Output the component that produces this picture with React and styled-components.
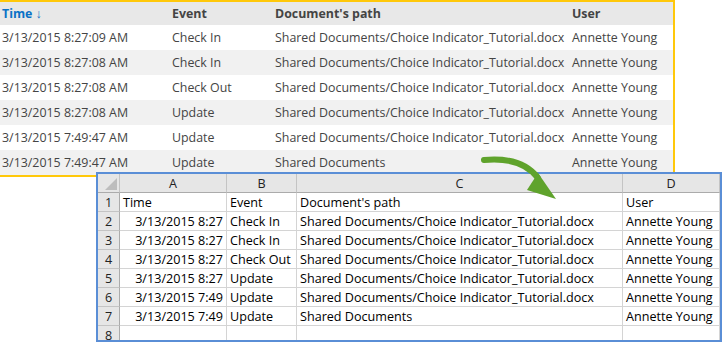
import React from "react";
import styled, { createGlobalStyle } from "styled-components";

const GlobalStyle = createGlobalStyle`
  html, body { margin: 0; padding: 0; background: #ffffff; }
  body { width: 722px; height: 342px; overflow: hidden; }
`;

const Page = styled.div`
  position: relative;
  width: 722px;
  height: 342px;
  overflow: hidden;
`;

/* ---------- SharePoint-like list ---------- */
const ListPanel = styled.div`
  width: 673px;
  border-top: 2px solid #ffc80a;
  border-right: 2px solid #ffc80a;
  border-bottom: 2px solid #ffc80a;
  background: #ffffff;
  font-family: "Open Sans", "Noto Sans", sans-serif;
  font-size: 12.4px;
  color: #444444;
`;

const ListRow = styled.div`
  display: grid;
  grid-template-columns: 170px 103px 297px 1fr;
  height: ${(p) => (p.$header ? 23 : 25)}px;
  align-items: center;
  background: ${(p) => (p.$header ? "#e8e8e8" : p.$alt ? "#f1f1f1" : "#ffffff")};
  font-weight: ${(p) => (p.$header ? 700 : 400)};
  color: ${(p) => (p.$header ? "#444444" : "#444444")};
`;

const ListCell = styled.div`
  padding-left: 2px;
  white-space: nowrap;
  overflow: hidden;
  color: ${(p) => (p.$sorted ? "#0a72c6" : "inherit")};
`;

const SortArrow = styled.span`
  font-weight: 400;
  margin-left: 3px;
`;

/* ---------- Excel-like sheet ---------- */
const Sheet = styled.div`
  position: relative;
  margin-left: 96px;
  margin-top: -5px;
  width: 622px;
  height: 166px;
  border: 2px solid #5a8ed6;
  background: #ffffff;
  overflow: hidden;
  font-family: "Open Sans", "Noto Sans", sans-serif;
  font-size: 12.6px;
  color: #000000;
`;

const SheetGrid = styled.div`
  display: grid;
  grid-template-columns: 22px 107px 70px 326px 97px;
  grid-auto-rows: 19px;
`;

const HeadCell = styled.div`
  background: #e6e6e6;
  border-right: 1px solid #c4c4c4;
  border-bottom: 1px solid #ababab;
  display: flex;
  align-items: center;
  justify-content: center;
  box-sizing: border-box;
  font-size: 12.6px;
  color: #222;
`;

const CornerCell = styled(HeadCell)`
  position: relative;
  justify-content: flex-end;
  align-items: flex-end;
  padding: 0 2px 2px 0;
`;

const RowNum = styled.div`
  background: #e6e6e6;
  border-right: 1px solid #ababab;
  border-bottom: 1px solid #c4c4c4;
  display: flex;
  align-items: center;
  justify-content: center;
  box-sizing: border-box;
  color: #222;
`;

const Cell = styled.div`
  border-right: 1px solid #d4d4d4;
  border-bottom: 1px solid #d4d4d4;
  box-sizing: border-box;
  display: flex;
  align-items: center;
  justify-content: ${(p) => (p.$right ? "flex-end" : "flex-start")};
  padding: 0 ${(p) => (p.$right ? 3 : 0)}px 0 ${(p) => (p.$right ? 0 : 3)}px;
  white-space: nowrap;
  overflow: hidden;
`;

const ArrowSvg = styled.svg`
  position: absolute;
  left: 478px;
  top: 152px;
  pointer-events: none;
`;

const listRows = [
  ["3/13/2015 8:27:09 AM", "Check In", "Shared Documents/Choice Indicator_Tutorial.docx", "Annette Young"],
  ["3/13/2015 8:27:08 AM", "Check In", "Shared Documents/Choice Indicator_Tutorial.docx", "Annette Young"],
  ["3/13/2015 8:27:08 AM", "Check Out", "Shared Documents/Choice Indicator_Tutorial.docx", "Annette Young"],
  ["3/13/2015 8:27:08 AM", "Update", "Shared Documents/Choice Indicator_Tutorial.docx", "Annette Young"],
  ["3/13/2015 7:49:47 AM", "Update", "Shared Documents/Choice Indicator_Tutorial.docx", "Annette Young"],
  ["3/13/2015 7:49:47 AM", "Update", "Shared Documents", "Annette Young"],
];

const sheetRows = [
  ["3/13/2015 8:27", "Check In", "Shared Documents/Choice Indicator_Tutorial.docx", "Annette Young"],
  ["3/13/2015 8:27", "Check In", "Shared Documents/Choice Indicator_Tutorial.docx", "Annette Young"],
  ["3/13/2015 8:27", "Check Out", "Shared Documents/Choice Indicator_Tutorial.docx", "Annette Young"],
  ["3/13/2015 8:27", "Update", "Shared Documents/Choice Indicator_Tutorial.docx", "Annette Young"],
  ["3/13/2015 7:49", "Update", "Shared Documents/Choice Indicator_Tutorial.docx", "Annette Young"],
  ["3/13/2015 7:49", "Update", "Shared Documents", "Annette Young"],
];

export default function App() {
  return (
    <Page>
      <GlobalStyle />
      <ListPanel>
        <ListRow $header>
          <ListCell $sorted>
            Time<SortArrow>↓</SortArrow>
          </ListCell>
          <ListCell>Event</ListCell>
          <ListCell>Document's path</ListCell>
          <ListCell>User</ListCell>
        </ListRow>
        {listRows.map((r, i) => (
          <ListRow key={i} $alt={i % 2 === 1}>
            {r.map((c, j) => (
              <ListCell key={j}>{c}</ListCell>
            ))}
          </ListRow>
        ))}
      </ListPanel>

      <Sheet>
        <SheetGrid>
          <CornerCell>
            <svg width="12" height="12" viewBox="0 0 12 12">
              <polygon points="12,0 12,12 0,12" fill="#bdbdbd" />
            </svg>
          </CornerCell>
          <HeadCell>A</HeadCell>
          <HeadCell>B</HeadCell>
          <HeadCell>C</HeadCell>
          <HeadCell>D</HeadCell>

          <RowNum>1</RowNum>
          <Cell>Time</Cell>
          <Cell>Event</Cell>
          <Cell>Document's path</Cell>
          <Cell>User</Cell>

          {sheetRows.map((r, i) => (
            <React.Fragment key={i}>
              <RowNum>{i + 2}</RowNum>
              <Cell $right>{r[0]}</Cell>
              <Cell>{r[1]}</Cell>
              <Cell>{r[2]}</Cell>
              <Cell>{r[3]}</Cell>
            </React.Fragment>
          ))}

          <RowNum>8</RowNum>
          <Cell />
          <Cell />
          <Cell />
          <Cell />
        </SheetGrid>
      </Sheet>

      <ArrowSvg width="90" height="60" viewBox="0 0 90 60">
        <path
          d="M6 8 C 28 6, 48 10, 60 26"
          fill="none"
          stroke="#5fa32c"
          strokeWidth="6"
          strokeLinecap="round"
        />
        <polygon points="49,38 60,21 78,47" fill="#5fa32c" />
      </ArrowSvg>
    </Page>
  );
}
